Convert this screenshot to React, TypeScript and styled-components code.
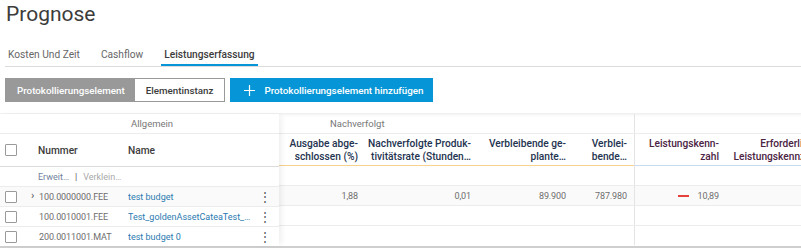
import React from 'react';
import styled, { createGlobalStyle } from 'styled-components';

const GlobalStyle = createGlobalStyle`
  body {
    margin: 0;
    font-family: Roboto, "Liberation Sans", sans-serif;
    background: #fff;
    color: #3c3c3c;
  }
`;

type Col = { w: number };

const trackedCols: Col[] = [{ w: 86 }, { w: 113 }, { w: 95 }, { w: 61 }];
const kpiCols: Col[] = [{ w: 91 }, { w: 100 }];
const trackedWidth = trackedCols.reduce((a, c) => a + c.w, 0);
const kpiWidth = kpiCols.reduce((a, c) => a + c.w, 0);

const rows = [
  { nummer: '100.0000000.FEE', name: 'test budget', expand: true, vals: ['1,88', '0,01', '89.900', '787.980', '10,89', '0,9'] },
  { nummer: '100.0010001.FEE', name: 'Test_goldenAssetCateaTest_go…', expand: false, vals: [] as string[] },
  { nummer: '200.0011001.MAT', name: 'test budget 0', expand: false, vals: [] as string[] },
];

const App = () => {
  return (
    <Page>
      <GlobalStyle />
      <Title>Prognose</Title>
      <Tabs>
        <Tab>Kosten Und Zeit</Tab>
        <Tab>Cashflow</Tab>
        <Tab $active>Leistungserfassung</Tab>
      </Tabs>
      <Toolbar>
        <Segment>
          <SegButton $active>Protokollierungselement</SegButton>
          <SegButton>Elementinstanz</SegButton>
        </Segment>
        <AddButton>
          <svg width="11" height="11" viewBox="0 0 11 11">
            <path d="M5.5 0v11M0 5.5h11" stroke="#fff" strokeWidth="1.2" />
          </svg>
          Protokollierungselement hinzufügen
        </AddButton>
      </Toolbar>

      <Table>
        <LeftPane>
          <GroupRow>
            <GroupLabel $pad={131}>Allgemein</GroupLabel>
          </GroupRow>
          <HeadRow $line="#dcdcdc">
            <Cell $w={28} $pad={5}>
              <Check />
            </Cell>
            <HeadCell $w={100} $pad={10}>Nummer</HeadCell>
            <HeadCell $w={151}>Name</HeadCell>
          </HeadRow>
          <FilterRow>
            <Cell $w={28} />
            <Cell $w={251} $pad={10}>
              <FilterLink>Erweit…</FilterLink>
              <FilterSep>|</FilterSep>
              <FilterLink $muted>Verklein…</FilterLink>
            </Cell>
          </FilterRow>
          {rows.map((r) => (
            <DataRow key={r.nummer} $shade={r.expand}>
              <Cell $w={28} $pad={5}>
                <Check />
              </Cell>
              <Cell $w={100} $pad={11}>
                {r.expand && <Chevron>›</Chevron>}
                <Muted>{r.nummer}</Muted>
              </Cell>
              <Cell $w={151}>
                <NameLink>{r.name}</NameLink>
                <Dots>⋮</Dots>
              </Cell>
            </DataRow>
          ))}
        </LeftPane>

        <RightPane>
          <GroupRow>
            <Group $w={trackedWidth}>
              <GroupLabel $pad={51}>Nachverfolgt</GroupLabel>
            </Group>
            <Group $w={kpiWidth} $divider />
          </GroupRow>
          <HeadRow>
            <Group $w={trackedWidth} $line="#f9d28f">
              <HeadCell $w={86} $right $color="#233350">Ausgabe abge-<br />schlossen (%)</HeadCell>
              <HeadCell $w={113} $right $color="#233350">Nachverfolgte Produk-<br />tivitätsrate (Stunden…</HeadCell>
              <HeadCell $w={95} $right $color="#233350">Verbleibende ge-<br />plante…</HeadCell>
              <HeadCell $w={61} $right $color="#233350">Verblei-<br />bende…</HeadCell>
            </Group>
            <Group $w={kpiWidth} $line="#c9dbee" $divider>
              <HeadCell $w={91} $right $color="#4b2443">Leistungskenn-<br />zahl</HeadCell>
              <HeadCell $w={100} $right $color="#4b2443">Erforderliche<br />Leistungskennzahl</HeadCell>
            </Group>
          </HeadRow>
          <FilterRow>
            <Group $w={trackedWidth} />
            <Group $w={kpiWidth} $divider />
          </FilterRow>
          {rows.map((r) => (
            <DataRow key={r.nummer} $shade={r.expand}>
              <Group $w={trackedWidth}>
                {trackedCols.map((c, i) => (
                  <Cell key={i} $w={c.w} $right>
                    <Muted>{r.vals[i]}</Muted>
                  </Cell>
                ))}
              </Group>
              <Group $w={kpiWidth} $divider>
                <Cell $w={91} $right>
                  {r.vals[4] && <RedBar />}
                  <Muted>{r.vals[4]}</Muted>
                </Cell>
                <Cell $w={100} $right>
                  <Muted>{r.vals[5]}</Muted>
                </Cell>
              </Group>
            </DataRow>
          ))}
        </RightPane>
      </Table>
    </Page>
  );
};

export default App;

const Page = styled.div`
  width: 801px;
  height: 250px;
  overflow: hidden;
`;

const Title = styled.h1`
  margin: 0;
  padding: 0 0 0 6px;
  font-size: 21px;
  font-weight: 400;
  line-height: 28px;
  color: #3c3c3c;
`;

const Tabs = styled.div`
  display: flex;
  gap: 15px;
  margin: 17px 0 0 5px;
  border-bottom: 1px solid #dcdcdc;
  height: 21px;
`;

const Tab = styled.div<{ $active?: boolean }>`
  padding: 0 3px;
  font-size: 10.2px;
  line-height: 19px;
  color: ${(p) => (p.$active ? '#3c3c3c' : '#666')};
  font-weight: ${(p) => (p.$active ? 500 : 400)};
  border-bottom: 2px solid ${(p) => (p.$active ? '#0696d7' : 'transparent')};
`;

const Toolbar = styled.div`
  display: flex;
  gap: 5px;
  margin: 11px 0 0 5px;
  height: 24px;
`;

const Segment = styled.div`
  display: flex;
  border: 1px solid #999;
`;

const SegButton = styled.div<{ $active?: boolean }>`
  display: flex;
  align-items: center;
  padding: 0 ${(p) => (p.$active ? '10px 0 11px' : '11px')};
  font-size: 9.8px;
  font-weight: 500;
  background: ${(p) => (p.$active ? '#999' : '#fff')};
  color: ${(p) => (p.$active ? '#fff' : '#3c3c3c')};
`;

const AddButton = styled.div`
  display: flex;
  align-items: center;
  gap: 9px;
  padding: 0 9px 0 14px;
  background: #0696d7;
  color: #fff;
  font-size: 9.8px;
  font-weight: 500;
`;

const Table = styled.div`
  display: flex;
  margin-top: 11px;
  border-top: 1px solid #f0f0f0;
  box-shadow: inset 0 3px 3px -2px rgba(0, 0, 0, 0.06);
  border-bottom: 2px solid #cfcfcf;
  font-size: 9px;
`;

const LeftPane = styled.div`
  flex: 0 0 279px;
  position: relative;
  z-index: 1;
  background: #fff;
  box-shadow: 4px 0 6px -2px rgba(0, 0, 0, 0.08);
`;

const RightPane = styled.div`
  flex: 1;
  overflow: hidden;
`;

const Row = styled.div<{ $line?: string }>`
  display: flex;
  border-bottom: 1px solid ${(p) => p.$line ?? '#ececec'};
`;

const GroupRow = styled(Row)`
  height: 19px;
`;

const HeadRow = styled(Row)`
  height: 32px;
  ${(p) => (p.$line ? '' : 'border-bottom: none;')}
`;

const FilterRow = styled(Row)`
  height: 19px;
`;

const DataRow = styled(Row)<{ $shade?: boolean }>`
  height: 19px;
  background: ${(p) => (p.$shade ? '#fafafa' : '#fff')};
  &:last-child {
    border-bottom: none;
  }
`;

const Group = styled.div<{ $w: number; $divider?: boolean; $line?: string }>`
  display: flex;
  flex: 0 0 ${(p) => p.$w}px;
  height: 100%;
  box-sizing: border-box;
  border-left: ${(p) => (p.$divider ? '1px solid #e4e4e4' : 'none')};
  border-bottom: ${(p) => (p.$line ? `1px solid ${p.$line}` : 'none')};
`;

const GroupLabel = styled.div<{ $pad: number }>`
  padding-left: ${(p) => p.$pad}px;
  font-size: 9.5px;
  line-height: 19px;
  color: #777;
`;

const Cell = styled.div<{ $w: number; $pad?: number; $right?: boolean }>`
  display: flex;
  align-items: center;
  justify-content: ${(p) => (p.$right ? 'flex-end' : 'flex-start')};
  flex: 0 0 ${(p) => p.$w}px;
  box-sizing: border-box;
  padding: ${(p) => (p.$right ? '0 7px 0 0' : `0 0 0 ${p.$pad ?? 0}px`)};
  position: relative;
  white-space: nowrap;
  min-width: 0;
`;

const HeadCell = styled(Cell)<{ $color?: string }>`
  font-size: 10.2px;
  font-weight: 500;
  line-height: 13px;
  text-align: ${(p) => (p.$right ? 'right' : 'left')};
  color: ${(p) => p.$color ?? '#3c3c3c'};
`;

const Check = styled.span`
  display: inline-block;
  width: 10px;
  height: 10px;
  border: 1px solid #9a9a9a;
  border-radius: 1px;
  background: #fff;
`;

const Muted = styled.span`
  color: #6e6e6e;
  letter-spacing: -0.1px;
`;

const Chevron = styled.span`
  position: absolute;
  left: 3px;
  top: 2px;
  font-size: 11px;
  color: #555;
`;

const NameLink = styled.span`
  flex: 1;
  min-width: 0;
  color: #2a7ab0;
  overflow: hidden;
  text-overflow: ellipsis;
`;

const Dots = styled.span`
  flex: 0 0 20px;
  margin-right: 4px;
  text-align: center;
  font-size: 12px;
  color: #555;
`;

const FilterLink = styled.span<{ $muted?: boolean }>`
  color: ${(p) => (p.$muted ? '#a8a8a8' : '#6f7f9c')};
  font-size: 9px;
`;

const FilterSep = styled.span`
  margin: 0 6px;
  color: #555;
`;

const RedBar = styled.span`
  display: inline-block;
  width: 11px;
  height: 2px;
  background: #e5403a;
  margin-right: 8px;
`;
